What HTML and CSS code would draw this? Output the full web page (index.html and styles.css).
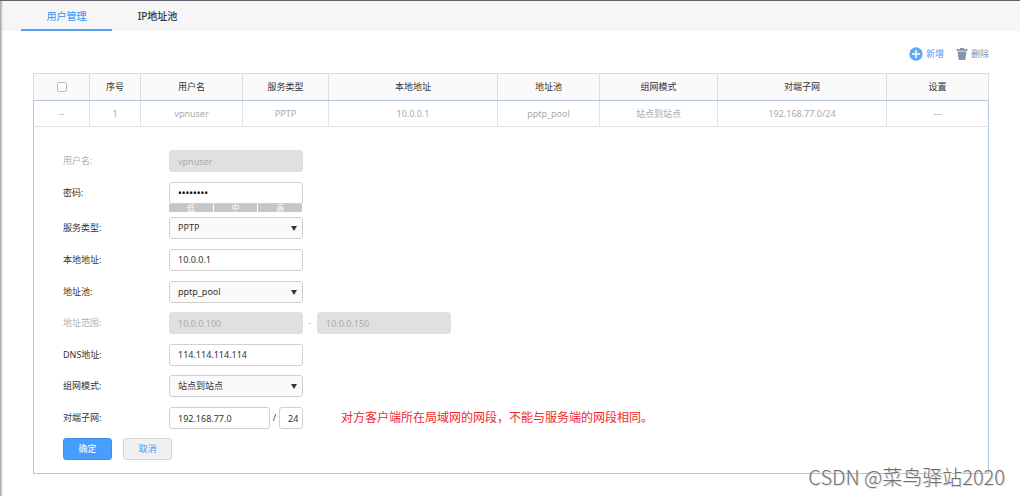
FILE: index.html
```html
<!DOCTYPE html>
<html lang="zh-CN">
<head>
<meta charset="utf-8">
<title>用户管理</title>
<link rel="stylesheet" href="styles.css">
</head>
<body>
<nav class="tabs">
  <a class="tab tab-active" href="#users">用户管理</a>
  <a class="tab" href="#pools">IP地址池</a>
</nav>
<main class="content">
  <div class="toolbar">
    <button class="tool tool-add" type="button">
      <svg class="icon" viewBox="0 0 14 14" width="14" height="14" aria-hidden="true"><circle cx="7" cy="7" r="6.7" fill="#60a9f5"/><path d="M7 3v8M3 7h8" stroke="#fff" stroke-width="1.5"/></svg>
      <span>新增</span>
    </button>
    <button class="tool tool-delete" type="button">
      <svg class="icon" viewBox="0 0 12 14" width="12" height="14" aria-hidden="true"><path d="M4 1h4v1h3.500v1.800H.5V2H4zM1.500 4.600h9L9.300 13H2.700z" fill="#8494ad"/></svg>
      <span>删除</span>
    </button>
  </div>
  <table class="users">
    <colgroup>
      <col class="c-check"><col class="c-index"><col class="c-mid"><col class="c-type"><col class="c-wide"><col class="c-mid"><col class="c-mode"><col class="c-wide"><col class="c-mid">
    </colgroup>
    <thead>
      <tr>
        <th><input class="check" type="checkbox" aria-label="全选"></th>
        <th>序号</th><th>用户名</th><th>服务类型</th><th>本地地址</th><th>地址池</th><th>组网模式</th><th>对端子网</th><th>设置</th>
      </tr>
    </thead>
    <tbody>
      <tr class="record">
        <td>--</td><td>1</td><td>vpnuser</td><td>PPTP</td><td>10.0.0.1</td><td>pptp_pool</td><td>站点到站点</td><td>192.168.77.0/24</td><td>---</td>
      </tr>
      <tr class="editor">
        <td colspan="9">
          <form>
            <div class="fields">
              <div class="row row-off">
                <label class="label" for="user">用户名:</label>
                <input class="field" id="user" type="text" value="vpnuser" disabled>
              </div>
              <div class="row row-password">
                <label class="label" for="pass">密码:</label>
                <div class="password">
                  <input class="field field-secret" id="pass" type="password" value="password">
                  <div class="strength"><span>低</span><span>中</span><span>高</span></div>
                </div>
              </div>
              <div class="row">
                <label class="label" for="type">服务类型:</label>
                <div class="select"><select class="field" id="type"><option>PPTP</option></select></div>
              </div>
              <div class="row">
                <label class="label" for="local">本地地址:</label>
                <input class="field" id="local" type="text" value="10.0.0.1">
              </div>
              <div class="row">
                <label class="label" for="pool">地址池:</label>
                <div class="select"><select class="field" id="pool"><option>pptp_pool</option></select></div>
              </div>
              <div class="row row-off">
                <label class="label" for="from">地址范围:</label>
                <input class="field" id="from" type="text" value="10.0.0.100" disabled>
                <span class="dash">-</span>
                <input class="field" type="text" value="10.0.0.150" aria-label="地址范围结束" disabled>
              </div>
              <div class="row">
                <label class="label" for="dns">DNS地址:</label>
                <input class="field" id="dns" type="text" value="114.114.114.114">
              </div>
              <div class="row">
                <label class="label" for="mode">组网模式:</label>
                <div class="select"><select class="field" id="mode"><option>站点到站点</option></select></div>
              </div>
              <div class="row">
                <label class="label" for="subnet">对端子网:</label>
                <input class="field field-subnet" id="subnet" type="text" value="192.168.77.0">
                <span class="slash">/</span>
                <input class="field field-mask" type="text" value="24" aria-label="掩码长度">
                <span class="note">对方客户端所在局域网的网段，不能与服务端的网段相同。</span>
              </div>
            </div>
            <div class="actions">
              <button class="btn btn-primary" type="button">确定</button>
              <button class="btn" type="button">取消</button>
            </div>
          </form>
        </td>
      </tr>
    </tbody>
  </table>
</main>
<div class="watermark">CSDN @菜鸟驿站2020</div>
</body>
</html>
```
FILE: styles.css
```css
* {
  box-sizing: border-box;
}

body {
  margin: 0;
  min-height: 100vh;
  border-top: 1px solid #625e6b;
  background: linear-gradient(to right, #a0a0a0, #fff 3px);
  color: #333;
  font: 9px/14px "Noto Sans", "Noto Sans CJK SC", sans-serif;
}

input,
select,
button {
  margin: 0;
  font: inherit;
  color: inherit;
}

.tabs {
  display: flex;
  height: 30px;
  padding-left: 21px;
  background: linear-gradient(to right, #a0a0a0, #f6f6f6 3px);
}

.tab {
  width: 91px;
  border-bottom: 2px solid transparent;
  color: #333;
  font-size: 10px;
  font-weight: 500;
  line-height: 30px;
  text-align: center;
  text-decoration: none;
}

.tab-active {
  border-color: #55a3f5;
  color: #4a9ff8;
}

.content {
  padding: 14px 31px 22px 33px;
}

.toolbar {
  display: flex;
  justify-content: flex-end;
  gap: 12px;
  height: 28px;
  align-items: flex-start;
}

.tool {
  display: flex;
  align-items: center;
  gap: 3px;
  height: 18px;
  padding: 0;
  border: 0;
  background: none;
}

.tool-add {
  color: #4a9af5;
}

.tool-delete {
  color: #8494ad;
}

.users {
  width: 100%;
  border-collapse: collapse;
  table-layout: fixed;
}

.c-check { width: 56px; }
.c-index { width: 51px; }
.c-mid { width: 102px; }
.c-type { width: 86px; }
.c-wide { width: 169px; }
.c-mode { width: 118px; }

.users th {
  height: 27px;
  padding: 0;
  border: 1px solid #ddd;
  border-bottom-color: #b4c6da;
  background: #fafafa;
  font-weight: 400;
}

.record td {
  height: 26px;
  padding: 0;
  border: 1px solid #e2e2e2;
  border-top-color: #b4c6da;
  color: #aaa;
  text-align: center;
}

.users .record td:first-child {
  border-left-color: #b4c6da;
}

.users .record td:last-child {
  border-right-color: #b4c6da;
}

.editor > td {
  padding: 23px 29px 13px;
  border: 1px solid #b4c6da;
  border-top-color: #e2e2e2;
}

.check {
  display: block;
  width: 10px;
  height: 10px;
  margin: 0 auto;
  border: 1px solid #bbb;
  border-radius: 2px;
  background: #fff;
  appearance: none;
}

.fields {
  display: flex;
  flex-direction: column;
  justify-content: space-between;
  min-height: 279px;
}

.row {
  display: flex;
  align-items: center;
  height: 22px;
}

.row-off {
  color: #b0b0b0;
}

.row-password {
  align-items: flex-start;
  height: 26px;
}

.label {
  width: 106px;
  line-height: 22px;
}

.field {
  display: block;
  width: 134px;
  height: 22px;
  padding: 0 8px;
  border: 1px solid #d0d0d0;
  border-radius: 3px;
  background: #fff;
}

.field:disabled {
  border-color: #e0e0e0;
  background: #e0e0e0;
  color: #aaa;
}

.field-secret {
  color: #000;
  font-size: 10px;
}

.select {
  position: relative;
}

.select .field {
  background: #fafafa;
  appearance: none;
}

.select::after {
  content: "";
  position: absolute;
  top: 9px;
  right: 6px;
  border: 3px solid transparent;
  border-top: 5px solid #333;
  border-bottom: 0;
  pointer-events: none;
}

.strength {
  display: grid;
  grid-template-columns: repeat(3, 1fr);
  gap: 1px;
  width: 133px;
  color: #fff;
  font-size: 8px;
  line-height: 8px;
  text-align: center;
}

.strength span {
  height: 8px;
  background: #c6c6c6;
}

.dash,
.slash {
  text-align: center;
}

.dash {
  width: 14px;
}

.field-subnet {
  width: 101px;
}

.slash {
  width: 9px;
}

.field-mask {
  width: 24px;
  padding: 0 4px 0 8px;
}

.note {
  margin-left: 38px;
  color: #f0282d;
  font-size: 12px;
  line-height: 18px;
}

.actions {
  display: flex;
  gap: 11px;
  padding-top: 9px;
}

.btn {
  width: 49px;
  height: 22px;
  padding: 0;
  border: 1px solid #d5d5d5;
  border-radius: 3px;
  background: #f0f0f2;
  color: #4a9af5;
}

.btn-primary {
  border-color: #3a90ee;
  background: #479ffd;
  color: #fff;
}

.watermark {
  position: absolute;
  right: 15px;
  bottom: 6px;
  color: #707070;
  font: 300 20px/26px "Noto Sans CJK SC", sans-serif;
  text-shadow: 1px 1px 0 #ddd;
}
```
